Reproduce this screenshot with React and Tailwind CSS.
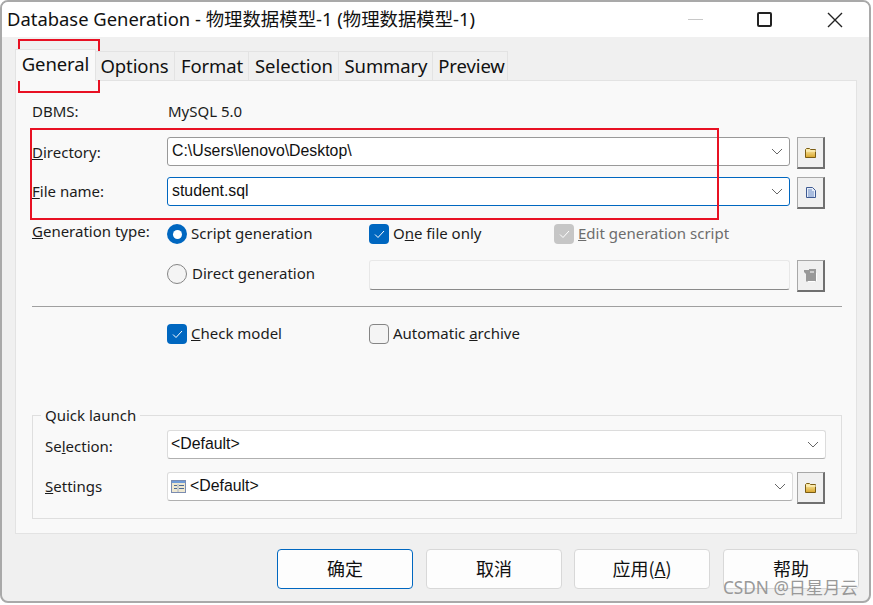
import React from "react";

const ui = "font-['Noto_Sans','Noto_Sans_CJK_SC',sans-serif]";
const cjk = "font-['Noto_Sans_CJK_SC',sans-serif]";

function Chevron() {
  return (
    <svg width="12" height="7" viewBox="0 0 12 7" className="shrink-0">
      <path d="M1 1l5 5 5-5" fill="none" stroke="#666" strokeWidth="1" />
    </svg>
  );
}

function Folder() {
  return (
    <svg width="12" height="10" viewBox="0 0 12 10">
      <defs>
        <linearGradient id="fg" x1="0" y1="0" x2="0" y2="1">
          <stop offset="0" stopColor="#fdf0b0" />
          <stop offset="1" stopColor="#d9a52c" />
        </linearGradient>
      </defs>
      <path d="M0.5 9.5V1.5l1-1h3l1 1h5v8z" fill="url(#fg)" stroke="#7a5c14" strokeWidth="1" />
      <path d="M1 3h10" stroke="#fff6cc" strokeWidth="1" />
    </svg>
  );
}

function Doc() {
  return (
    <svg width="10" height="11" viewBox="0 0 10 11">
      <path d="M0.5 0.5h6l3 3v7h-9z" fill="#e6edf8" stroke="#3e5a92" strokeWidth="1" />
      <path d="M2 3h4M2 5h6M2 7h6M2 9h6" stroke="#6d8cc4" strokeWidth="1" />
    </svg>
  );
}

function GrayFile() {
  return (
    <svg width="13" height="13" viewBox="0 0 13 13">
      <path d="M0 1h5v-1h7v12l-1 1H3l-1-1V5L0 3z" fill="#999" />
      <path d="M6 3h4" stroke="#fff" strokeWidth="1" />
      <path d="M3.5 12.5h8M12.500 4v8" stroke="#fff" strokeWidth="1" />
    </svg>
  );
}

function TableIcon() {
  return (
    <svg width="15" height="13" viewBox="0 0 15 13" className="shrink-0">
      <rect x="0.500" y="0.500" width="14" height="12" fill="#eee7cf" stroke="#7b8cb0" />
      <rect x="1" y="1" width="13" height="2" fill="#6f9bd8" />
      <path d="M3 5.500h3M8 5.500h5M3 8.500h3M8 8.500h5" stroke="#4c6a96" strokeWidth="1" />
      <path d="M7 4v8" stroke="#a8b4c8" strokeWidth="1" />
    </svg>
  );
}

function IconButton({ children }) {
  return (
    <div className="w-[28px] h-[32px] shrink-0 flex items-center justify-center bg-[#f0f0f0] border border-[#a8a8a8] border-r-2 border-b-2 border-r-[#707070] border-b-[#707070]">
      {children}
    </div>
  );
}

function Combo({ text, active, soft, icon, className }) {
  const border = active
    ? "border-[#0067c0]"
    : soft
      ? "border-[#dcdcdc] border-b-[#b0b0b0]"
      : "border-[#999999]";
  const pad = soft ? "pl-[3px]" : "pl-[4px]";
  return (
    <div className={`h-[29px] flex items-center bg-white border rounded-[3px] pr-[6px] ${pad} ${border} ${className}`}>
      {icon}
      <span className={`font-['Liberation_Sans',sans-serif] text-[#111] text-[15.850px] flex-1 leading-none -mt-[2px] ${icon ? "ml-[4px]" : ""}`}>{text}</span>
      <Chevron />
    </div>
  );
}

function Check({ on, disabled }) {
  const cls = disabled
    ? "bg-[#c6c6c6]"
    : on
      ? "bg-[#0067c0]"
      : "bg-[#f4f4f4] border border-[#858585]";
  return (
    <div className={`w-[20px] h-[20px] rounded-[4px] shrink-0 flex items-center justify-center ${cls}`}>
      {(on || disabled) && (
        <svg width="11" height="9" viewBox="0 0 11 9">
          <path d="M1 4.500l3 3 6-6.500" fill="none" stroke="#fff" strokeWidth="1" />
        </svg>
      )}
    </div>
  );
}

function Label({ children, className = "" }) {
  return <span className={`text-[15px] leading-none text-[#1c1c1c] whitespace-nowrap ${className}`}>{children}</span>;
}

const tabs = [
  ["Options", "w-[79px]", "pr-[1px]"],
  ["Format", "w-[74px]", "pl-[1px]"],
  ["Selection", "w-[90px]", "pl-[1px]"],
  ["Summary", "w-[94px]", "pl-[1px]"],
  ["Preview", "w-[75px]", "pl-[3px]"],
];

export default function App() {
  return (
    <div className={`relative w-[873px] h-[605px] bg-white overflow-hidden ${ui}`}>
      <div className="w-[871px] h-[603px] border-2 border-[#a9a9a9] rounded-[8px] overflow-hidden flex flex-col bg-[#f0f0f0]">
        {/* Title bar */}
        <div className="h-[35px] bg-white flex items-center shrink-0">
          <span className={`ml-[5px] text-[18.400px] text-[#111] whitespace-nowrap leading-none ${ui}`}>
            Database Generation - 物理数据模型-1 (物理数据模型-1)
          </span>
          <div className="ml-auto flex items-center">
            <div className="w-[15px] h-px bg-[#c8c8c8]" />
            <div className="ml-[54px] w-[15px] h-[15px] border-2 border-[#222] rounded-[2px]" />
            <svg width="16" height="16" viewBox="0 0 16 16" className="ml-[55px] mr-[26px]">
              <path d="M1 1l14 14M15 1L1 15" stroke="#222" strokeWidth="1.400" />
            </svg>
          </div>
        </div>

        {/* Tabs */}
        <div className="mt-[12px] ml-[13px] h-[31px] flex items-end shrink-0 relative z-10">
          <div className="w-[81px] h-[32px] -mb-px bg-[#f9f9f9] border border-[#e3e3e3] border-b-0 flex items-center justify-center text-[18.500px] tracking-[-0.100px] leading-none text-[#111] pb-[3px]">
            General
          </div>
          {tabs.map(([t, w, p]) => (
            <div key={t} className={`${w} ${p} h-[29px] bg-[#f0f0f0] border border-[#e3e3e3] border-l-0 border-b-0 flex items-center justify-center text-[18.500px] tracking-[-0.100px] leading-none text-[#111]`}>
              {t}
            </div>
          ))}
        </div>

        {/* Panel */}
        <div className="ml-[13px] w-[842px] h-[454px] bg-[#f9f9f9] border border-[#e3e3e3] pl-[16px] pr-[14px] shrink-0">
          <div className="mt-[19px] h-[22px] flex items-center">
            <Label className="w-[136px]">DBMS:</Label>
            <Label>MySQL 5.0</Label>
          </div>

          <div className="mt-[15px] flex items-start">
            <Label className="w-[135px] mt-[8px]"><span className="underline">D</span>irectory:</Label>
            <Combo text="C:\Users\lenovo\Desktop\" className="flex-1" />
            <div className="w-[7px]" />
            <IconButton><Folder /></IconButton>
            <div className="w-[17px]" />
          </div>

          <div className="mt-[8px] flex items-start">
            <Label className="w-[135px] mt-[7px]"><span className="underline">F</span>ile name:</Label>
            <Combo text="student.sql" active className="flex-1" />
            <div className="w-[7px]" />
            <IconButton><Doc /></IconButton>
            <div className="w-[17px]" />
          </div>

          <div className="mt-[15px] h-[20px] flex items-center">
            <Label className="w-[135px] -mt-[5px]"><span className="underline">G</span>eneration type:</Label>
            <div className="w-[20px] h-[20px] rounded-full bg-[#0067c0] flex items-center justify-center shrink-0">
              <div className="w-[9px] h-[9px] rounded-full bg-white" />
            </div>
            <Label className="ml-[4px] w-[178px] -mt-[1px]">Script generation</Label>
            <Check on />
            <Label className="ml-[4px] w-[161px] -mt-[1px]">O<span className="underline">n</span>e file only</Label>
            <Check disabled />
            <Label className="ml-[4px] !text-[#6d6d6d] -mt-[1px]"><span className="underline">E</span>dit generation script</Label>
          </div>

          <div className="mt-[16px] flex items-start">
            <div className="w-[135px] shrink-0" />
            <div className="w-[20px] h-[20px] mt-[4px] rounded-full bg-[#f4f4f4] border border-[#858585] shrink-0" />
            <Label className="ml-[5px] mt-[6px] w-[177px]">Direct generation</Label>
            <div className="flex-1 h-[30px] bg-[#f9f9f9] border border-[#e8e8e8] border-b-[#8a8a8a] rounded-[3px]" />
            <div className="w-[7px]" />
            <IconButton><GrayFile /></IconButton>
            <div className="w-[17px]" />
          </div>

          <div className="mt-[14px] h-px bg-[#a0a0a0]" />

          <div className="mt-[17px] h-[20px] flex items-center">
            <div className="w-[135px] shrink-0" />
            <Check on />
            <Label className="ml-[4px] w-[178px] -mt-[1px]"><span className="underline">C</span>heck model</Label>
            <Check />
            <Label className="ml-[4px] -mt-[1px]">Automatic <span className="underline">a</span>rchive</Label>
          </div>

          {/* Quick launch group */}
          <div className="relative mt-[71px] h-[104px] border border-[#dfdfdf] pl-[12px] pr-[15px] pt-[14px]">
            <span className="absolute left-[8px] -top-[8px] px-[4px] bg-[#f9f9f9]">
              <Label className="block">Quick launch</Label>
            </span>
            <div className="flex items-start">
              <Label className="w-[122px] mt-[9px]">Se<span className="underline">l</span>ection:</Label>
              <Combo text="<Default>" soft className="flex-1" />
            </div>
            <div className="mt-[13px] flex items-start">
              <Label className="w-[122px] mt-[7px]"><span className="underline">S</span>ettings</Label>
              <Combo text="<Default>" soft icon={<TableIcon />} className="flex-1" />
              <div className="w-[4px]" />
              <IconButton><Folder /></IconButton>
              <div className="w-px" />
            </div>
          </div>
        </div>

        {/* Dialog buttons */}
        <div className={`mt-[15px] ml-[275px] flex text-[18px] leading-none text-[#111] ${cjk}`}>
          <div className="w-[136px] h-[40px] pb-[2px] bg-[#fdfdfd] border border-[#0067c0] rounded-[4px] flex items-center justify-center">确定</div>
          <div className="ml-[13px] w-[136px] h-[40px] pb-[2px] bg-[#fdfdfd] border border-[#d8d8d8] rounded-[4px] flex items-center justify-center">取消</div>
          <div className="ml-[12px] w-[136px] h-[40px] pb-[2px] bg-[#fdfdfd] border border-[#d8d8d8] rounded-[4px] flex items-center justify-center">应用(<span className="underline">A</span>)</div>
          <div className="ml-[13px] w-[136px] h-[40px] pb-[2px] bg-[#fdfdfd] border border-[#d8d8d8] rounded-[4px] flex items-center justify-center">帮助</div>
        </div>
      </div>

      {/* Red annotation rectangles and watermark lie over the dialog */}
      <div className="absolute left-[18px] top-[39px] w-[82px] h-[54px] border-2 border-[#e81123]" />
      <div className="absolute left-[30px] top-[128px] w-[689px] h-[92px] border-2 border-[#e81123]" />
      <span className={`absolute left-[723px] top-[579px] text-[17.200px] leading-none text-[#999] whitespace-nowrap ${ui}`}>CSDN @日星月云</span>
    </div>
  );
}
